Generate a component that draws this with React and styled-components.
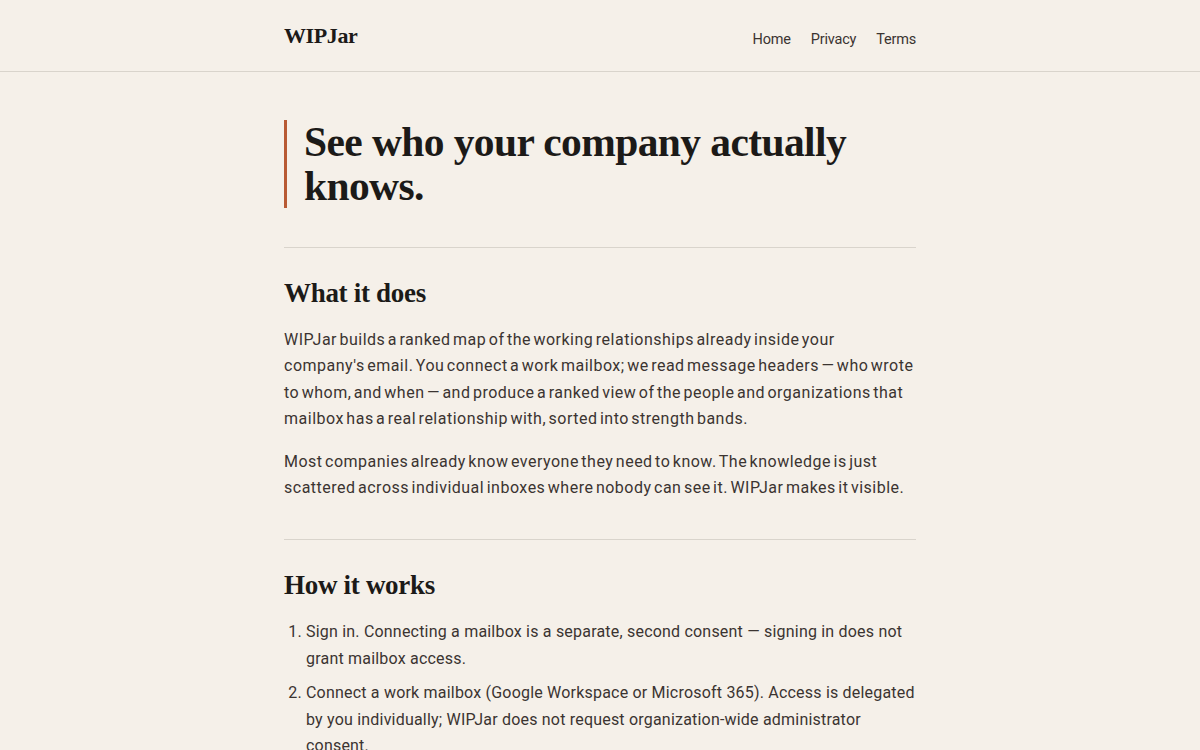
import React from 'react';
import styled, { createGlobalStyle } from 'styled-components';

const COLORS = {
  bg: '#f5f0e9',
  ink: '#1c1a18',
  text: '#3b3431',
  rule: '#d9d4cc',
  accent: '#b85a34',
};

const FONT = {
  serif: '"Liberation Serif", "DejaVu Serif", serif',
  sans: 'Roboto, "Liberation Sans", sans-serif',
};

const GlobalStyle = createGlobalStyle`
  html, body {
    margin: 0;
    padding: 0;
    background: ${COLORS.bg};
  }
  body {
    font-family: ${FONT.sans};
    color: ${COLORS.text};
    -webkit-font-smoothing: antialiased;
  }
`;

const Header = styled.header`
  border-bottom: 1px solid ${COLORS.rule};
`;

const Bar = styled.div`
  max-width: 632px;
  margin: 0 auto;
  height: 71px;
  display: flex;
  align-items: center;
  justify-content: space-between;
`;

const Logo = styled.a`
  font-family: ${FONT.serif};
  font-weight: 700;
  font-size: 22px;
  color: ${COLORS.ink};
  text-decoration: none;
  letter-spacing: -0.4px;
`;

const Nav = styled.nav`
  display: flex;
  gap: 20px;
  margin-top: 7px;
`;

const NavLink = styled.a`
  font-size: 14.5px;
  color: ${COLORS.text};
  text-decoration: none;
  letter-spacing: -0.2px;
`;

const Main = styled.main`
  max-width: 632px;
  margin: 0 auto;
  padding-top: 48px;
`;

const Hero = styled.h1`
  margin: 0;
  border-left: 3px solid ${COLORS.accent};
  padding-left: 17px;
  font-family: ${FONT.serif};
  font-weight: 700;
  font-size: 41.5px;
  line-height: 44px;
  color: ${COLORS.ink};
  letter-spacing: -0.6px;
`;

const Section = styled.section`
  border-top: 1px solid ${COLORS.rule};
  margin-top: ${({ $first }) => ($first ? '39px' : '38px')};
  padding-top: 27px;
`;

const Heading = styled.h2`
  margin: 0 0 16px;
  font-family: ${FONT.serif};
  font-weight: 700;
  font-size: 27px;
  line-height: 36px;
  color: ${COLORS.ink};
  letter-spacing: -0.3px;
`;

const Para = styled.p`
  margin: 0 0 16px;
  font-size: 16px;
  line-height: 26.4px;
  letter-spacing: 0.5px;
  word-spacing: -2px;
`;

const Steps = styled.ol`
  margin: 0;
  padding-left: 22px;
  font-size: 16px;
  line-height: 26.4px;
  letter-spacing: 0.2px;
`;

const Step = styled.li`
  margin-bottom: 8px;
`;

export default function App() {
  return (
    <>
      <GlobalStyle />
      <Header>
        <Bar>
          <Logo href="#">WIPJar</Logo>
          <Nav>
            <NavLink href="#">Home</NavLink>
            <NavLink href="#">Privacy</NavLink>
            <NavLink href="#">Terms</NavLink>
          </Nav>
        </Bar>
      </Header>
      <Main>
        <Hero>See who your company actually knows.</Hero>

        <Section $first>
          <Heading>What it does</Heading>
          <Para>
            WIPJar builds a ranked map of the working relationships already inside your
            company's email. You connect a work mailbox; we read message headers — who wrote
            to whom, and when — and produce a ranked view of the people and organizations that
            mailbox has a real relationship with, sorted into strength bands.
          </Para>
          <Para>
            Most companies already know everyone they need to know. The knowledge is just
            scattered across individual inboxes where nobody can see it. WIPJar makes it visible.
          </Para>
        </Section>

        <Section>
          <Heading>How it works</Heading>
          <Steps>
            <Step>
              Sign in. Connecting a mailbox is a separate, second consent — signing in does not
              grant mailbox access.
            </Step>
            <Step>
              Connect a work mailbox (Google Workspace or Microsoft 365). Access is delegated
              by you individually; WIPJar does not request organization-wide administrator
              consent.
            </Step>
            <Step>
              We read headers only: sender, recipients and dates. Message bodies and attachments
              are never fetched.
            </Step>
          </Steps>
        </Section>
      </Main>
    </>
  );
}
